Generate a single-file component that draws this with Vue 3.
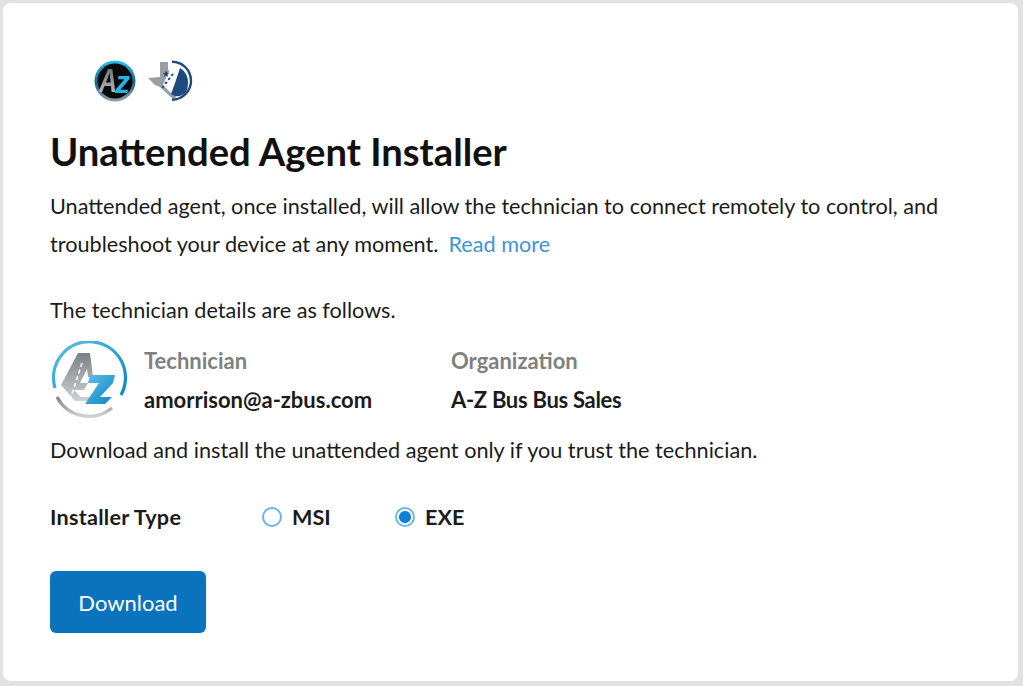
<script setup>
const details = [
  { label: 'Technician', value: 'amorrison@a-zbus.com' },
  { label: 'Organization', value: 'A-Z Bus Bus Sales' },
]
</script>

<template>
  <main class="card">
    <div class="logos">
      <svg class="logo-az" viewBox="0 0 42 42" width="42" height="42">
        <defs>
          <linearGradient id="ring" x1="0" y1="0" x2="0" y2="1">
            <stop offset="0" stop-color="#2bc0ee" />
            <stop offset="0.55" stop-color="#14658c" />
            <stop offset="1" stop-color="#9a9ea1" />
          </linearGradient>
          <linearGradient id="letterA" x1="0" y1="0" x2="0" y2="1">
            <stop offset="0" stop-color="#5d6063" />
            <stop offset="1" stop-color="#c5c8ca" />
          </linearGradient>
        </defs>
        <circle cx="21" cy="21" r="20.500" fill="url(#ring)" />
        <circle cx="21" cy="21" r="17.500" fill="#08090b" />
        <text x="5" y="32" class="az-a" textLength="18" lengthAdjust="spacingAndGlyphs">A</text>
        <text x="21" y="33" class="az-z" textLength="15" lengthAdjust="spacingAndGlyphs">z</text>
      </svg>
      <svg class="logo-tx" viewBox="0 0 46 42" width="46" height="42">
        <path d="M12 2h8v8l12 3-4 24-2 3-14-13-5-2-7-7 12-1z" fill="#9a9ea2" />
        <path d="M22 9L32 12 25 35 15 25z" fill="#fff" />
        <path d="M24 .5A20.200 20.200 0 1 1 24 40.900V38.500A17.800 17.800 0 1 0 24 2.900z" fill="#1f4a80" />
        <path d="M32 8c5 3 8 8 8 14 0 5-1 9-3 11-3 3-9 5-14 1l4-11z" fill="#1f4a80" />
        <path d="M25 14l-11 14" stroke="#1f4a80" stroke-width="2" stroke-dasharray="2.500 2.500" fill="none" />
        <path d="M18 10.500l1 2.200 2.300.2-1.800 1.500.6 2.300-2.100-1.300-2 1.300.6-2.300-1.800-1.500 2.300-.2z" fill="#1f4a80" />
      </svg>
    </div>

    <h1 class="title">Unattended Agent Installer</h1>
    <p class="text intro">
      Unattended agent, once installed, will allow the technician to connect remotely to control, and
      troubleshoot your device at any moment.&nbsp; <a class="link" href="#">Read more</a>
    </p>

    <p class="text lead">The technician details are as follows.</p>

    <section class="tech">
      <svg class="avatar" viewBox="0 0 78 78" width="78" height="78">
        <defs>
          <linearGradient id="blue" x1="0" y1="0" x2="1" y2="1">
            <stop offset="0" stop-color="#5cc0e8" />
            <stop offset="1" stop-color="#0f84c4" />
          </linearGradient>
          <linearGradient id="grey" x1="0" y1="0" x2="0" y2="1">
            <stop offset="0" stop-color="#7b8084" />
            <stop offset="1" stop-color="#cfd2d4" />
          </linearGradient>
        </defs>
        <path d="M5 47A36 36 0 1 1 71 54" fill="none" stroke="url(#blue)" stroke-width="3.200" />
        <path d="M7 56A36 36 0 0 0 62 67" fill="none" stroke="url(#grey)" stroke-width="3.200" />
        <path d="M28 12H40L43 36H38L37 28 30 42H38L34 49H24L31 56H44L41 60H25L11 44z" fill="url(#grey)" />
        <path d="M32 22l-11 34" stroke="#fff" stroke-width="1.600" stroke-dasharray="4 3" fill="none" />
        <path d="M40 34H65L63 42 50 56H62L55 63H35L49 42H38z" fill="url(#blue)" />
      </svg>
      <div v-for="item in details" :key="item.label" class="detail">
        <span class="detail-label">{{ item.label }}</span>
        <span class="detail-value">{{ item.value }}</span>
      </div>
    </section>

    <p class="text trust">Download and install the unattended agent only if you trust the technician.</p>

    <div class="installer">
      <span class="installer-label">Installer Type</span>
      <label class="radio"><span class="dot"></span>MSI</label>
      <label class="radio"><span class="dot on"></span>EXE</label>
    </div>

    <button class="download">Download</button>
  </main>
</template>

<style>
html, body { margin: 0; background: #e2e2e2; }
</style>

<style scoped>
.card {
  box-sizing: border-box;
  width: 1015px;
  height: 678px;
  margin: 3px 0 0 3px;
  padding: 57px 47px 0;
  background: #fff;
  border-radius: 8px;
  font-family: Lato, sans-serif;
  color: #1b1b1b;
}
.logos { display: flex; align-items: center; height: 42px; padding-left: 44px; gap: 12px; }
.logos svg, .avatar { filter: blur(0.4px); }
.az-a { font: italic 700 34px "Liberation Sans", sans-serif; fill: url(#letterA); }
.az-z { font: italic 700 31px "Liberation Sans", sans-serif; fill: #27b2e6; }
.title { margin: 26px 0 0; font-size: 38.2px; line-height: 46px; font-weight: 700; color: #111; }
.text { margin: 0; font-size: 21.65px; line-height: 38px; }
.intro { margin-top: 13px; width: 920px; }
.link { color: #3f94d6; text-decoration: none; margin-left: -1px; }
.lead { margin-top: 28px; }
.tech { display: flex; margin-top: 12px; height: 80px; }
.avatar { flex: none; margin: 0 16px 0 0; }
.detail { display: flex; flex-direction: column; width: 307px; font-size: 22px; line-height: 39px; }
.detail-label { color: #808080; font-weight: 700; }
.detail-value { font-weight: 700; }
.detail:last-child .detail-value { letter-spacing: -0.3px; }
.trust { margin-top: 10px; }
.installer { display: flex; align-items: center; margin-top: 29px; height: 38px; font-size: 21.6px; font-weight: 700; }
.installer-label { width: 212px; letter-spacing: 0.25px; }
.radio { display: flex; align-items: center; width: 133px; }
.dot {
  box-sizing: border-box;
  width: 20px;
  height: 20px;
  margin-right: 10px;
  border: 2px solid #6cb6e8;
  border-radius: 50%;
  background: #fff;
}
.dot.on { background: radial-gradient(circle, #0f7fd8 0 5.500px, #fff 6.500px); }
.download {
  display: block;
  margin-top: 35px;
  width: 156px;
  height: 62px;
  border: 0;
  border-radius: 6px;
  background: #0b72bd;
  color: #fff;
  font: 400 22px Lato, sans-serif;
}
</style>
